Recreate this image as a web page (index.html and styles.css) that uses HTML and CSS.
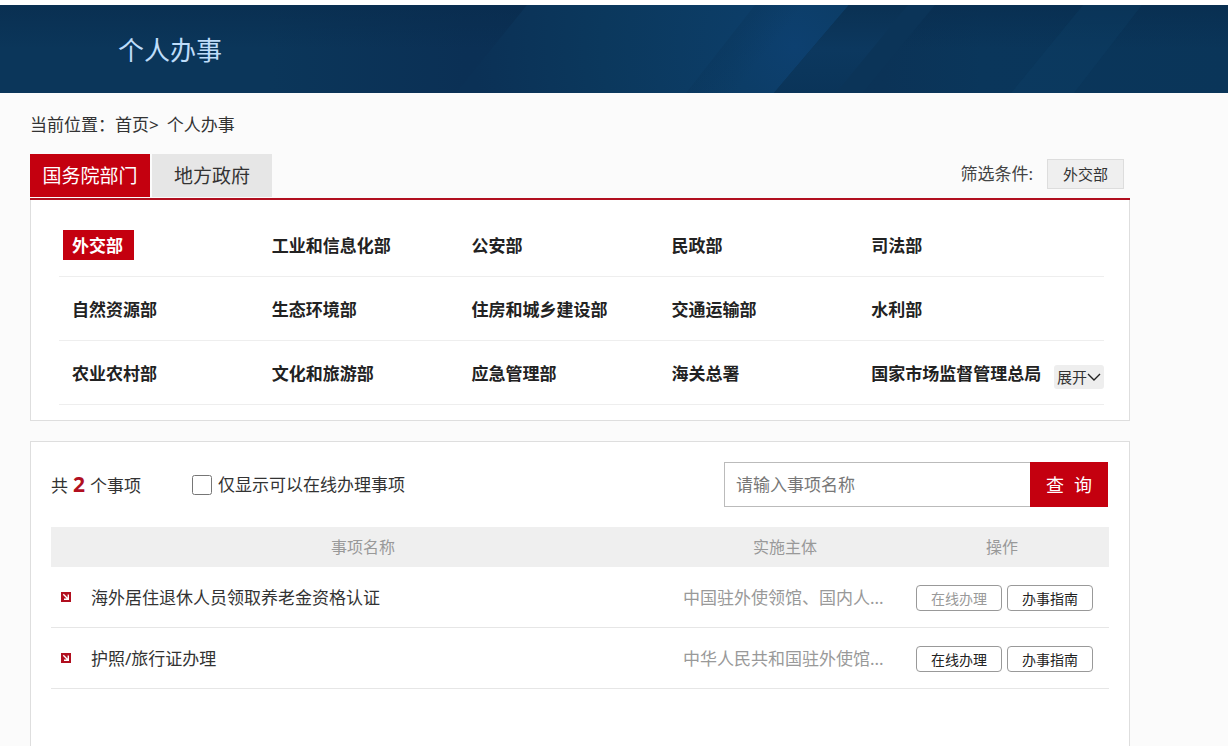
FILE: index.html
```html
<!DOCTYPE html>
<html lang="zh-CN">
<head>
<meta charset="utf-8">
<meta name="viewport" content="width=device-width, initial-scale=1">
<title>个人办事</title>
<link rel="stylesheet" href="styles.css">
</head>
<body>
<header class="banner">
  <svg class="banner-art" viewBox="0 0 1228 88" preserveAspectRatio="none" aria-hidden="true">
    <defs>
      <linearGradient id="base" x1="0" x2="1" y1="0" y2="0">
        <stop offset="0" stop-color="#0b365a"/>
        <stop offset="0.22" stop-color="#0b365a"/>
        <stop offset="0.38" stop-color="#0b3055"/>
        <stop offset="0.72" stop-color="#0b3357"/>
        <stop offset="0.8" stop-color="#0a365b"/>
        <stop offset="1" stop-color="#0a3559"/>
      </linearGradient>
      <linearGradient id="shade" x1="0" x2="0" y1="0" y2="1">
        <stop offset="0" stop-color="#082b4c" stop-opacity="0.6"/>
        <stop offset="0.5" stop-color="#082b4c" stop-opacity="0"/>
      </linearGradient>
      <radialGradient id="glow" gradientUnits="userSpaceOnUse" cx="795" cy="42" r="320">
        <stop offset="0" stop-color="#0d4070"/>
        <stop offset="0.2" stop-color="#0c3d67"/>
        <stop offset="0.6" stop-color="#0b385d"/>
        <stop offset="1" stop-color="#0b3156"/>
      </radialGradient>
      <linearGradient id="edge" gradientUnits="userSpaceOnUse" x1="720" y1="44" x2="750" y2="68">
        <stop offset="0" stop-color="#0a3459" stop-opacity="0.35"/>
        <stop offset="1" stop-color="#0a3459" stop-opacity="0"/>
      </linearGradient>
      <linearGradient id="band" x1="0" x2="0" y1="0" y2="1">
        <stop offset="0" stop-color="#0a3153"/>
        <stop offset="0.5" stop-color="#0c385f"/>
        <stop offset="1" stop-color="#0a3459"/>
      </linearGradient>
    </defs>
    <rect width="1228" height="88" fill="url(#base)"/>
    <rect width="1228" height="88" fill="url(#shade)"/>
    <path d="M527 0H849L774 88H456Z" fill="url(#glow)"/>
    <path d="M755 0H849L774 88H686Z" fill="url(#edge)"/>
    <path d="M849 0H935L863 88H774Z" fill="#0b3458"/>
    <path d="M849 0H908L836 88H774Z" fill="url(#band)"/>
    <path d="M1083 0H1142L1074 88H1011Z" fill="#0e426d" opacity="0.25"/>
  </svg>
  <h1 class="banner-title">个人办事</h1>
</header>

<main class="page">
  <nav class="crumbs" aria-label="当前位置">当前位置：<a href="#">首页</a>&gt;<a class="crumb-here" href="#">个人办事</a></nav>

  <div class="tabbar">
    <div class="tabs">
      <button type="button" class="tab tab-active">国务院部门</button>
      <button type="button" class="tab">地方政府</button>
    </div>
    <div class="filter">
      <span>筛选条件:</span>
      <button type="button" class="filter-tag">外交部</button>
    </div>
  </div>

  <section class="panel departments">
    <ul class="dept-row">
      <li><a class="dept dept-active" href="#">外交部</a></li>
      <li><a class="dept" href="#">工业和信息化部</a></li>
      <li><a class="dept" href="#">公安部</a></li>
      <li><a class="dept" href="#">民政部</a></li>
      <li><a class="dept" href="#">司法部</a></li>
    </ul>
    <ul class="dept-row">
      <li><a class="dept" href="#">自然资源部</a></li>
      <li><a class="dept" href="#">生态环境部</a></li>
      <li><a class="dept" href="#">住房和城乡建设部</a></li>
      <li><a class="dept" href="#">交通运输部</a></li>
      <li><a class="dept" href="#">水利部</a></li>
    </ul>
    <ul class="dept-row">
      <li><a class="dept" href="#">农业农村部</a></li>
      <li><a class="dept" href="#">文化和旅游部</a></li>
      <li><a class="dept" href="#">应急管理部</a></li>
      <li><a class="dept" href="#">海关总署</a></li>
      <li class="dept-last"><a class="dept" href="#">国家市场监督管理总局</a>
        <button type="button" class="expand">展开<svg class="chevron" viewBox="0 0 14 10" aria-hidden="true"><path d="M1 2L7 8L13 2" fill="none" stroke="#222" stroke-width="1.4"/></svg></button></li>
    </ul>
  </section>

  <section class="panel results">
    <div class="toolbar">
      <p class="count">共<strong>2</strong>个事项</p>
      <label class="online"><input type="checkbox" class="tick">仅显示可以在线办理事项</label>
      <form class="search">
        <input type="text" class="search-box" placeholder="请输入事项名称" aria-label="事项名称">
        <button type="button" class="search-btn"><span>查</span><span>询</span></button>
      </form>
    </div>
    <table class="items">
      <colgroup><col><col class="col-body"><col class="col-ops"></colgroup>
      <thead>
        <tr><th>事项名称</th><th>实施主体</th><th>操作</th></tr>
      </thead>
      <tbody>
        <tr>
          <td><a class="item" href="#"><svg class="marker" viewBox="0 0 10 10" aria-hidden="true"><path d="M0 0H10V10H0Z" fill="#b10f1f"/><path d="M2.3 2.3L6.5 6.5M7.3 2.5V7.3H3" fill="none" stroke="#fff" stroke-width="1.4"/></svg>海外居住退休人员领取养老金资格认证</a></td>
          <td class="body">中国驻外使领馆、国内人...</td>
          <td><div class="ops"><button type="button" class="op" disabled>在线办理</button><button type="button" class="op">办事指南</button></div></td>
        </tr>
        <tr>
          <td><a class="item" href="#"><svg class="marker" viewBox="0 0 10 10" aria-hidden="true"><path d="M0 0H10V10H0Z" fill="#b10f1f"/><path d="M2.3 2.3L6.5 6.5M7.3 2.5V7.3H3" fill="none" stroke="#fff" stroke-width="1.4"/></svg>护照/旅行证办理</a></td>
          <td class="body">中华人民共和国驻外使馆...</td>
          <td><div class="ops"><button type="button" class="op">在线办理</button><button type="button" class="op">办事指南</button></div></td>
        </tr>
      </tbody>
    </table>
  </section>
</main>
</body>
</html>
```
FILE: styles.css
```css
* {
  box-sizing: border-box;
}

body {
  margin: 0;
  min-height: 100vh;
  display: flex;
  flex-direction: column;
  border-top: 5px solid #fff;
  background: #fbfbfb;
  color: #333;
  font-family: "Noto Sans", "Noto Sans CJK SC", sans-serif;
  font-size: 17px;
  line-height: 24px;
}

a {
  color: inherit;
  text-decoration: none;
}

button,
input {
  font: inherit;
  color: inherit;
}

button {
  cursor: pointer;
}

.banner {
  position: relative;
  display: flex;
  align-items: center;
  height: 88px;
  padding: 2px 0 0 118px;
}

.banner-art {
  position: absolute;
  inset: 0;
  width: 100%;
  height: 100%;
}

.banner-title {
  position: relative;
  margin: 0;
  color: #bedcf9;
  font-size: 26px;
  font-weight: 400;
}

.page {
  flex: 1;
  display: flex;
  flex-direction: column;
  width: 100%;
  max-width: 1130px;
  padding-left: 30px;
}

.crumbs {
  padding: 20px 0 17px;
}

.crumb-here {
  margin-left: 8px;
}

.tabbar {
  display: flex;
  justify-content: space-between;
  padding-bottom: 1px;
  border-bottom: 2px solid #b10f1f;
}

.tabs {
  display: flex;
  gap: 2px;
}

.tab {
  width: 120px;
  height: 43px;
  padding: 0;
  border: 0;
  background: #e6e6e6;
  font-size: 19px;
}

.tab-active {
  background: #c4000f;
  color: #fff;
}

.filter {
  display: flex;
  align-items: center;
  gap: 14px;
  padding: 0 6px 3px 0;
  color: #444;
}

.filter-tag {
  height: 30px;
  padding: 0 15px;
  border: 1px solid #ddd;
  background: #efefef;
  color: #333;
  font-size: 15px;
}

.panel {
  border: 1px solid #dedede;
  background: #fff;
}

.departments {
  padding: 13px 25px 15px 28px;
  border-top: 0;
}

.dept-row {
  display: grid;
  grid-template-columns: 200fr 200fr 200fr 200fr 242fr;
  align-items: center;
  height: 64px;
  margin: 0;
  padding: 0 0 0 4px;
  border-bottom: 1px solid #eee;
  list-style: none;
}

.dept {
  display: inline-block;
  padding: 4px 10px 2px 9px;
  color: #222;
  font-weight: 700;
  white-space: nowrap;
}

.dept-active {
  padding-right: 11px;
  background: #c4000f;
  color: #fff;
}

.dept-last {
  display: flex;
  align-items: center;
  justify-content: space-between;
}

.expand {
  display: flex;
  align-items: center;
  height: 24px;
  margin-top: 8px;
  padding: 0 3px;
  border: 0;
  border-radius: 3px;
  background: #eee;
  font-size: 15px;
  white-space: nowrap;
}

.chevron {
  width: 14px;
  height: 10px;
}

.results {
  flex: 1;
  margin-top: 20px;
  padding: 20px;
  border-bottom: 0;
}

.toolbar {
  display: flex;
  align-items: center;
  margin-bottom: 20px;
  padding-right: 1px;
}

.count {
  margin: 0;
}

.count strong {
  margin: 0 5px;
  color: #b10f1f;
  font-size: 21px;
}

.online {
  display: flex;
  align-items: center;
  gap: 6px;
  margin-left: 51px;
}

.tick {
  width: 20px;
  height: 20px;
  margin: 0;
}

.search {
  display: flex;
  margin-left: auto;
}

.search-box {
  width: 306px;
  height: 45px;
  padding: 0 11px;
  border: 1px solid #bbb;
  border-right: 0;
  background: #fff;
}

.search-box::placeholder {
  color: #777;
}

.search-btn {
  display: flex;
  align-items: center;
  justify-content: center;
  gap: 10px;
  width: 78px;
  padding: 0;
  border: 0;
  background: #c4000f;
  color: #fff;
  font-size: 18px;
}

.items {
  width: 100%;
  border-collapse: separate;
  border-spacing: 0;
  table-layout: fixed;
}

.col-body {
  width: 220px;
}

.col-ops {
  width: 214px;
}

.items th {
  height: 40px;
  padding: 0;
  background: #efefef;
  color: #999;
  font-size: 16px;
  font-weight: 400;
}

.items td {
  height: 61px;
  padding: 2px 0 0;
  border-bottom: 1px solid #e6e6e6;
}

.item {
  display: flex;
  align-items: center;
  gap: 20px;
  padding-left: 10px;
}

.marker {
  width: 10px;
  height: 10px;
  margin-bottom: 2px;
}

.items .body {
  padding-left: 8px;
  color: #999;
  white-space: nowrap;
}

.ops {
  display: flex;
  justify-content: flex-end;
  gap: 5px;
  padding-right: 16px;
}

.op {
  width: 86px;
  height: 26px;
  padding: 2px 0 0;
  border: 1px solid #999;
  border-radius: 4px;
  background: #fff;
  color: #222;
  font-size: 14px;
  line-height: 22px;
}

.op:disabled {
  color: #999;
}
```
